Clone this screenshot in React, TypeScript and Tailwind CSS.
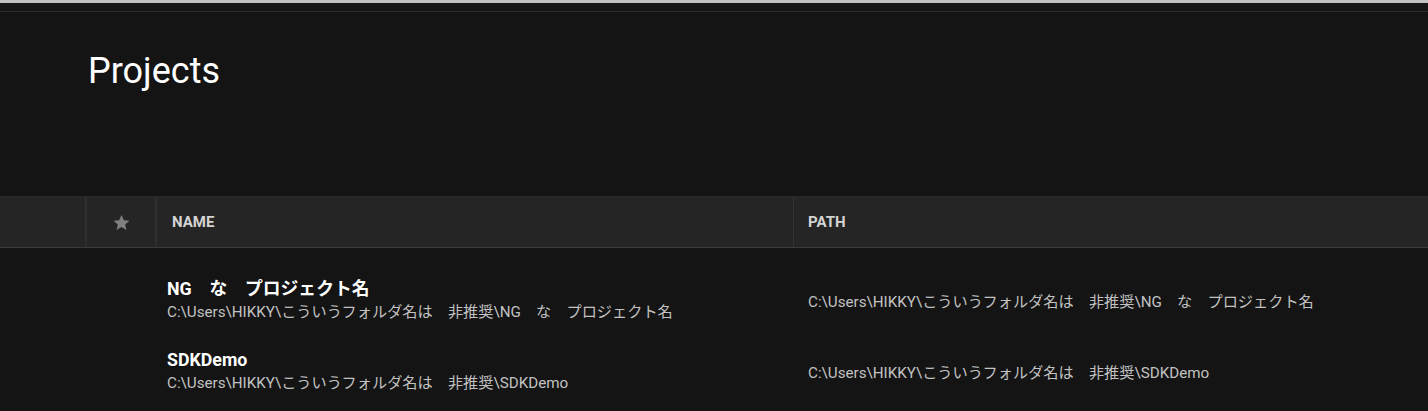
import React from "react";

const font = { fontFamily: 'Roboto, "Noto Sans CJK JP", sans-serif' };

function Star() {
  return (
    <svg width="19" height="19" viewBox="0 0 24 24" className="text-[#808080]">
      <path
        fill="currentColor"
        d="M12 2.5l2.9 6.6 7.1.6-5.4 4.7 1.6 7-6.2-3.7-6.2 3.7 1.6-7L2 9.7l7.1-.6z"
      />
    </svg>
  );
}

const rows = [
  {
    name: "NG\u3000な\u3000プロジェクト名",
    path: "C:\\Users\\HIKKY\\こういうフォルダ名は\u3000非推奨\\NG\u3000な\u3000プロジェクト名",
  },
  {
    name: "SDKDemo",
    path: "C:\\Users\\HIKKY\\こういうフォルダ名は\u3000非推奨\\SDKDemo",
  },
];

export default function App() {
  return (
    <div className="w-[1428px] h-[411px] overflow-hidden bg-[#141414]" style={font}>
      <div className="h-[3px] bg-[#c4c4c4]" />
      <div className="h-[8px] bg-[#171717] border-b border-[#2b2b2b] box-content" />
      <div className="h-[184px] pl-[88px] pt-[39px]">
        <h1 className="text-[36px] leading-[40px] text-white font-normal">Projects</h1>
      </div>
      <div className="flex h-[52px] bg-[#252525] border-t border-[#2a2a2a] border-b border-b-[#3a3a3a]">
        <div className="w-[87px] border-r-2 border-[#2f2f2f]" />
        <div className="w-[70px] flex items-center justify-center border-r-2 border-[#2f2f2f]">
          <Star />
        </div>
        <div className="w-[637px] flex items-center pl-[15px] border-r border-[#333333] text-[15px] font-bold text-[#d4d4d4]">
          NAME
        </div>
        <div className="flex-1 flex items-center pl-[14px] text-[15px] font-bold text-[#d4d4d4]">
          PATH
        </div>
      </div>
      <div className="pt-[18px]">
        {rows.map((r, i) => (
          <div key={i} className="flex h-[71px] items-center">
            <div className="w-[167px]" />
            <div className="w-[627px] flex flex-col">
              <div className="text-[17.8px] leading-[22px] font-bold text-white">{r.name}</div>
              <div className="text-[15.2px] leading-[25px] text-[#c2c2c2]">{r.path}</div>
            </div>
            <div className="flex-1 pl-[14px] text-[15.2px] leading-[20px] text-[#c2c2c2]">{r.path}</div>
          </div>
        ))}
      </div>
    </div>
  );
}
